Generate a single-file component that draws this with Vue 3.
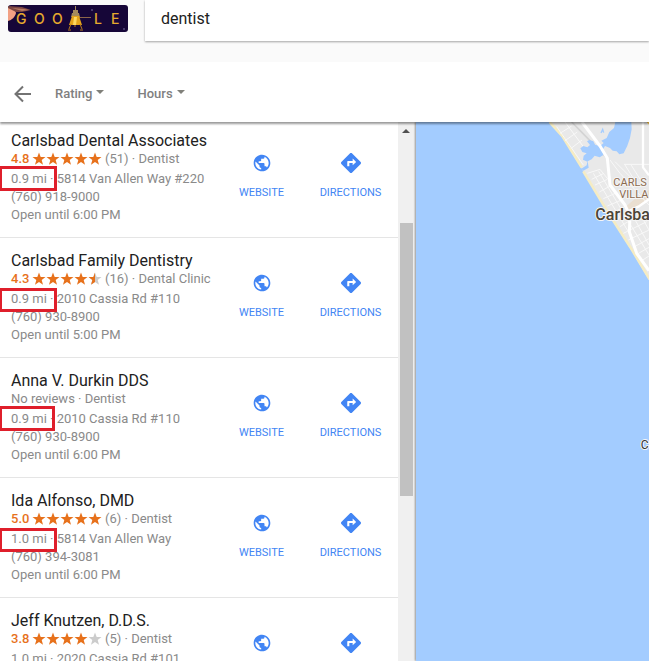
<script setup>
import { ref } from "vue";

const query = ref("dentist");
const filters = ["Rating", "Hours"];

const star = "M7 0.4 L8.7 4.9 L13.5 5.1 L9.7 8.1 L11 12.8 L7 10.1 L3 12.8 L4.3 8.1 L0.5 5.1 L5.3 4.9 Z";

const places = [
  { name: "Carlsbad Dental Associates", score: "4.8", stars: 5, reviews: 51, kind: "Dentist", distance: "0.9 mi", street: "5814 Van Allen Way #220", phone: "(760) 918-9000", hours: "Open until 6:00 PM", mark: "tall" },
  { name: "Carlsbad Family Dentistry", score: "4.3", stars: 4.5, reviews: 16, kind: "Dental Clinic", distance: "0.9 mi", street: "2010 Cassia Rd #110", phone: "(760) 930-8900", hours: "Open until 5:00 PM", mark: "short" },
  { name: "Anna V. Durkin DDS", kind: "Dentist", distance: "0.9 mi", street: "2010 Cassia Rd #110", phone: "(760) 930-8900", hours: "Open until 6:00 PM", mark: "tall narrow" },
  { name: "Ida Alfonso, DMD", score: "5.0", stars: 5, reviews: 6, kind: "Dentist", distance: "1.0 mi", street: "5814 Van Allen Way", phone: "(760) 394-3081", hours: "Open until 6:00 PM", mark: "short" },
  { name: "Jeff Knutzen, D.D.S.", score: "3.8", stars: 4, reviews: 5, kind: "Dentist", distance: "1.0 mi", street: "2020 Cassia Rd #101" },
];
</script>

<template>
  <div class="page">
    <header class="header">
      <a class="logo" href="#" aria-label="Google">
        <svg viewBox="0 0 120 27" width="120" height="27">
          <defs>
            <clipPath id="plate"><rect width="120" height="27" rx="3" /></clipPath>
          </defs>
          <g clip-path="url(#plate)">
            <rect width="120" height="27" fill="#160638" />
            <path d="M0 2 C4 2 7 4 8 8 C7 12 4 15 0 16 Z" fill="#f2a184" />
            <path d="M0 1 L14 2 L23 5 L14 7 L8 7 L0 3 Z" fill="#7a4440" />
            <path d="M4 3 L16 4 L21 5 L14 6 Z" fill="#b87a62" />
            <text class="logo-text" x="8 26 44 86 103" y="19">GOOLE</text>
            <path d="M65 5 h5 v3 h-5 z M67 1 h1 v4 h-1 z M64 8 h7 l1 4 h-9 z" fill="#a58a5c" />
            <path d="M71 12 h12 v1 h-12 z" fill="#8c6549" />
            <path d="M64 11 L71 11 L74 20 L61 20 Z" fill="#e5a41a" />
            <path d="M66 12 L69 12 L68 20 L65 20 Z" fill="#ffd860" />
            <path d="M63 19 L61 24 M72 19 L74 24 M67 20 V22 M60 25 h3 M72 25 h3" stroke="#b67a1c" stroke-width="1" fill="none" />
            <circle cx="84" cy="5" r="1" fill="#584c7c" />
            <circle cx="116" cy="24" r="1" fill="#584c7c" />
          </g>
        </svg>
      </a>
      <form class="search" @submit.prevent>
        <input v-model="query" type="text" aria-label="Search" />
      </form>
    </header>

    <nav class="toolbar">
      <button class="back" type="button" aria-label="Back">
        <svg viewBox="0 0 24 24" width="24" height="24">
          <path d="M20 12 H5 M12 4.5 L4.500 12 L12 19.5" fill="none" stroke="#737373" stroke-width="2" />
        </svg>
      </button>
      <button v-for="f in filters" :key="f" class="filter" type="button">
        {{ f }}<span class="caret"></span>
      </button>
    </nav>

    <main class="content">
      <section class="results">
        <article v-for="p in places" :key="p.name" class="place">
          <div class="info">
            <h2>{{ p.name }}</h2>
            <div class="rating">
              <template v-if="p.score">
                <span class="score">{{ p.score }}</span>
                <span class="stars">
                  <svg v-for="n in 5" :key="n" viewBox="0 0 14 14" width="14" height="14">
                    <path :d="star" :fill="n <= p.stars ? '#e7711b' : '#cccccc'" />
                    <path v-if="n - p.stars === 0.5" class="half" :d="star" fill="#e7711b" />
                  </svg>
                </span>
                <span>({{ p.reviews }}) · {{ p.kind }}</span>
              </template>
              <span v-else>No reviews · {{ p.kind }}</span>
            </div>
            <p>{{ p.distance }} · {{ p.street }}</p>
            <p v-if="p.phone">{{ p.phone }}</p>
            <p v-if="p.hours">{{ p.hours }}</p>
          </div>
          <a class="action" href="#">
            <svg viewBox="0 0 24 24" width="20" height="20">
              <path fill="#4285f4" d="M12 2C6.480 2 2 6.480 2 12s4.480 10 10 10 10-4.480 10-10S17.520 2 12 2zm-1 17.930c-3.950-.490-7-3.850-7-7.930 0-.620.080-1.210.210-1.790L9 15v1c0 1.100.9 2 2 2v1.930zm6.900-2.540c-.260-.810-1-1.390-1.900-1.390h-1v-3c0-.550-.450-1-1-1H8v-2h2c.550 0 1-.450 1-1V7h2c1.100 0 2-.9 2-2v-.410c2.930 1.190 5 4.060 5 7.410 0 2.080-.8 3.970-2.100 5.390z" />
            </svg>
            <span>WEBSITE</span>
          </a>
          <a class="action" href="#">
            <svg viewBox="0 0 24 24" width="20" height="20">
              <path fill="#4285f4" d="M23.600 10.900L13.100.4c-.6-.6-1.600-.6-2.200 0L.4 10.900c-.6.6-.6 1.600 0 2.200l10.500 10.500c.6.6 1.600.6 2.200 0l10.500-10.500c.6-.6.6-1.600 0-2.200zM14 14.800v-2.900h-4V16H7.500v-5.400c0-.6.500-1.100 1.100-1.100H14V6.600l4.200 4.100z" />
            </svg>
            <span>DIRECTIONS</span>
          </a>
          <div v-if="p.mark" class="mark" :class="p.mark"></div>
        </article>
      </section>

      <div class="scrollbar">
        <span class="up"></span>
        <span class="thumb"></span>
      </div>

      <section class="map">
        <svg viewBox="-252 36 699 1617" preserveAspectRatio="xMinYMin slice">
          <rect x="-255" y="36" width="702" height="1617" fill="#a3ccff" />
          <path d="M147 36 L185 78 L246 178 L320 305 L390 415 L447 510 V36 Z" fill="#e9e9e9" />
          <!-- beach -->
          <path d="M149 36 L187 78 L245 172 M250 184 L322 304 L392 413 L449 508" fill="none" stroke="#f5ecc4" stroke-width="8" />
          <!-- village area -->
          <path d="M375 292 L415 258 L447 240 V270 L400 302 Z" fill="#eadfd1" />
          <!-- minor streets -->
          <g fill="none" stroke="#f8f8f8" stroke-width="3">
            <path d="M170 50 L250 165 M195 36 L265 130 M180 70 L215 48 M195 92 L232 66 M212 116 L246 90" />
            <path d="M262 190 L300 178 L330 215 M275 208 L312 190 M285 225 L322 208 M298 246 L334 226 M310 266 L346 250 M322 288 L360 272 M335 310 L374 290 M280 190 L385 365 M296 184 L365 300" />
            <path d="M330 150 L360 190 L447 285 M345 155 L405 215 M372 163 H447 M375 165 L400 205 M392 163 L420 207" />
            <path d="M345 330 L385 310 M360 350 L400 325 M370 370 L440 335 M385 390 L447 360 M400 412 L447 386 M412 432 L447 412 M425 452 L447 438 M400 320 L447 405 M420 312 L447 360 M386 335 L447 435" />
          </g>
          <path d="M215 36 L258 80 L322 145" fill="none" stroke="#d4d4d4" stroke-width="5" />
          <!-- lagoon -->
          <path d="M241 115 L250 108 L262 112 L270 105 L261 94 L268 90 L280 94 L285 104 L300 108 L311 99 L304 92 L320 84 L328 66 L342 54 L346 36 L394 36 L395 58 L390 84 L382 107 L371 130 L358 133 L350 124 L338 122 L330 114 L315 108 L308 119 L310 135 L299 142 L284 137 L275 148 L263 154 L266 173 L250 182 L244 176 L260 166 L262 155 L249 149 L251 137 L260 130 L247 126 Z" fill="#a3ccff" />
          <path d="M303 69 L308 58 L311 68 M360 62 L365 55" fill="none" stroke="#a3ccff" stroke-width="4" />
          <!-- main roads -->
          <g fill="none" stroke="#ffffff" stroke-linejoin="round">
            <path d="M246 36 L300 108 L322 145 L330 225 L375 285 L390 318 L388 365 L410 430 L447 482" stroke-width="9" />
            <path d="M429 36 V172 L447 196" stroke-width="7" />
            <path d="M378 308 L415 290 L447 268" stroke-width="7" />
          </g>
          <path d="M440 36 H447 V44 Z" fill="#f5c044" />
          <g class="map-label">
            <text class="area" x="340" y="228">CARLS</text>
            <text class="area" x="358" y="264">VILLA</text>
            <text class="city" x="286" y="329">Carlsba</text>
            <text class="poi" x="422" y="1018">C</text>
          </g>
        </svg>
      </section>
    </main>
  </div>
</template>

<style>
body {
  margin: 0;
  overflow: hidden;
}
</style>

<style scoped>
.page {
  display: flex;
  flex-direction: column;
  height: 100vh;
  font-family: Roboto, Arial, sans-serif;
  background: #fff;
}
.header {
  display: flex;
  flex: none;
  height: 62px;
  background: #fafafa;
}
.logo {
  flex: none;
  width: 120px;
  padding: 5px 17px 0 8px;
}
.logo svg { display: block; }
.logo-text {
  font-family: Inter, sans-serif;
  font-size: 14px;
  font-weight: 500;
  fill: #e6aa2e;
}
.search {
  flex: 1;
  height: 41px;
  background: #fff;
  box-shadow: 0 1px 2px rgba(0, 0, 0, 0.35);
}
.search input {
  box-sizing: border-box;
  width: 100%;
  height: 36px;
  padding: 0 16px;
  border: none;
  outline: none;
  background: transparent;
  font-family: inherit;
  font-size: 16px;
  color: #212121;
}
.toolbar {
  position: relative;
  z-index: 1;
  display: flex;
  flex: none;
  align-items: center;
  height: 60px;
  padding-left: 11px;
  background: #fff;
  box-shadow: 0 2px 2px rgba(0, 0, 0, 0.4);
}
.toolbar button {
  display: flex;
  align-items: center;
  border: none;
  background: none;
  font-family: inherit;
  cursor: pointer;
}
.toolbar .back {
  margin-right: 20px;
  padding: 4px 0 0;
}
.toolbar .filter {
  margin-right: 33px;
  padding: 3px 0 0;
  font-size: 13px;
  font-weight: 500;
  color: #808080;
}
.caret {
  margin: 0 0 4px 4px;
  border: 4px solid transparent;
  border-top-color: #80807a;
  border-bottom: none;
}
.content {
  display: flex;
  flex: 1;
  min-height: 0;
}
.results {
  flex: 0 0 398px;
  overflow: hidden;
}
.place {
  position: relative;
  display: grid;
  grid-template-columns: 1fr 89px 89px;
  box-sizing: border-box;
  height: 120px;
  padding: 13px 3px 0 11px;
  border-bottom: 1px solid #e5e5e5;
}
/* the list is scrolled a little past its start */
.place:first-child { margin-top: -4px; }
.info {
  font-size: 13px;
  line-height: 18px;
  color: #8a8a8a;
  white-space: nowrap;
}
h2 {
  margin: 0;
  font-size: 16px;
  font-weight: 400;
  line-height: 20px;
  color: #212121;
}
.rating {
  display: flex;
  align-items: center;
  height: 16px;
  margin-bottom: 3px;
}
.score {
  width: 21px;
  font-weight: 500;
  color: #e7711b;
}
.stars {
  display: flex;
  margin-right: 3px;
}
.half { clip-path: inset(0 50% 0 0); }
p { margin: 0; }
.action {
  display: flex;
  flex-direction: column;
  align-items: center;
  gap: 13px;
  padding-top: 22px;
  font-size: 11px;
  line-height: 14px;
  color: #4285f4;
  text-decoration: none;
}
/* red frame drawn over the distance */
.mark {
  position: absolute;
  left: -1px;
  top: 50px;
  box-sizing: border-box;
  width: 58px;
  height: 24px;
  border: 3px solid #df1f2b;
}
.mark.tall {
  top: 48px;
  height: 25px;
}
.mark.narrow { width: 56px; }
.scrollbar {
  display: flex;
  flex: none;
  flex-direction: column;
  align-items: flex-end;
  width: 15px;
  border-right: 3px solid #f4f4f4;
  background: #f0f0f0;
}
.up {
  margin: 7px 3px 90px 0;
  border: 4px solid transparent;
  border-top: none;
  border-bottom-color: #505050;
}
.thumb {
  width: 13px;
  height: 273px;
  background: #c1c1c1;
}
.map {
  flex: 1;
  min-width: 0;
  overflow: hidden;
  background: #a3ccff;
  box-shadow: -1px 0 2px rgba(0, 0, 0, 0.4);
}
.map svg {
  display: block;
  width: 100%;
  height: 100%;
}
.map-label text {
  paint-order: stroke;
  stroke: #f5f5f5;
  stroke-width: 6px;
  stroke-linejoin: round;
}
.map-label .area {
  font-size: 33px;
  fill: #8c6b50;
}
.map-label .city {
  font-size: 48px;
  font-weight: 500;
  fill: #4c4436;
}
.map-label .poi {
  font-size: 36px;
  fill: #333;
}
</style>
